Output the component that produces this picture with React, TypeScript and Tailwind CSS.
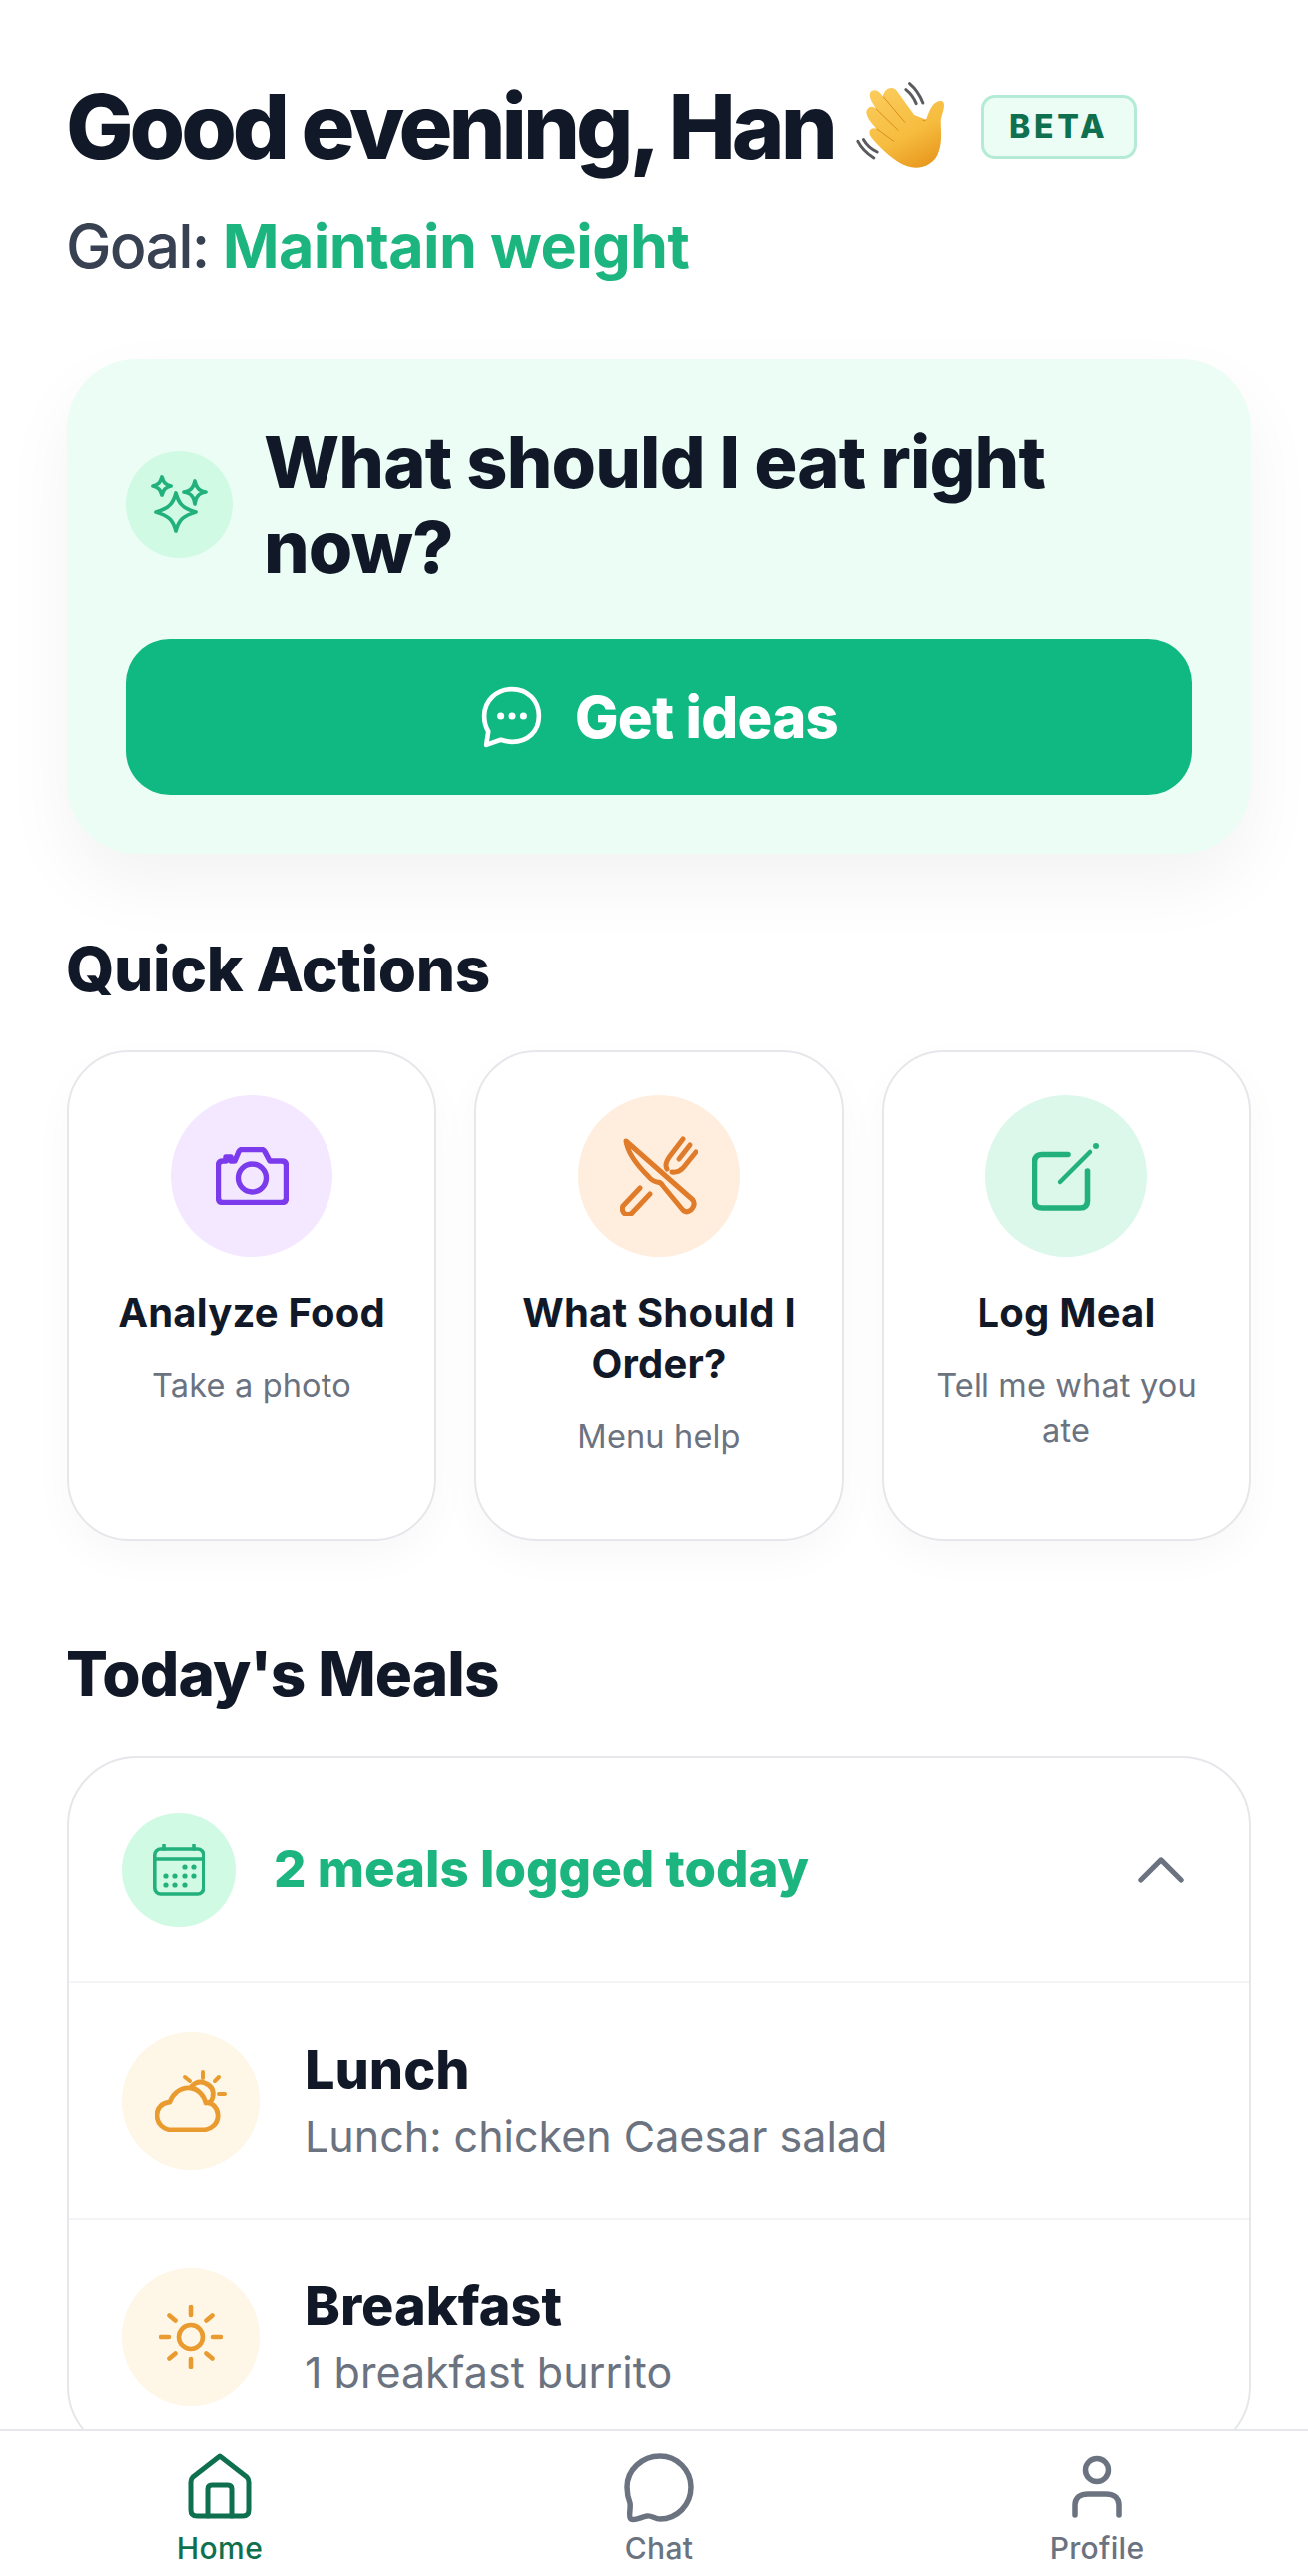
import React from "react";

function WaveHand() {
  return (
    <svg width="97" height="100" viewBox="40 50 290 300" fill="none" className="shrink-0">
      <defs>
        <linearGradient id="hand" x1="0.2" y1="0" x2="0.7" y2="1">
          <stop offset="0" stopColor="#FBCB5B" />
          <stop offset="0.6" stopColor="#F6BC3F" />
          <stop offset="1" stopColor="#E99A1F" />
        </linearGradient>
      </defs>
      <g stroke="#5B5B5F" strokeWidth="9" strokeLinecap="round">
        <path d="M212 70 Q238 92 252 128" />
        <path d="M201 88 Q222 105 232 130" />
        <path d="M57 243 Q72 272 105 293" />
        <path d="M74 238 Q88 262 115 275" />
      </g>
      <path
        d="M98 92 C112 84 124 96 132 108 C136 86 160 74 174 92 L226 164 L262 178 C270 150 285 118 308 122 C322 126 314 150 306 176 C304 200 312 240 300 272 C288 316 240 330 205 318 C170 305 130 270 98 232 C84 214 96 198 114 206 C98 190 74 160 86 146 C94 136 104 138 112 146 C100 126 84 104 98 92Z"
        fill="url(#hand)"
      />
      <g stroke="#D98E1E" strokeWidth="3" strokeLinecap="round">
        <path d="M134 110 L198 186" />
        <path d="M112 146 L178 210" />
        <path d="M114 206 L165 243" />
        <path d="M262 178 Q258 186 252 180" />
      </g>
    </svg>
  );
}

function Sparkles() {
  return (
    <svg width="58" height="58" viewBox="0 0 58 58" fill="none" stroke="#22B07D" strokeWidth="3.8" strokeLinejoin="round">
      <path d="M25 20 Q27 28 31 32 Q35 36 45 39 Q35 42 31 46 Q27 50 25 58 Q23 50 19 46 Q15 42 5 39 Q15 36 19 32 Q23 28 25 20Z" transform="translate(0 -2)" />
      <path d="M11 2 Q12 6 14 8 Q16 10 20 11 Q16 12 14 14 Q12 16 11 20 Q10 16 8 14 Q6 12 2 11 Q6 10 8 8 Q10 6 11 2Z" />
      <path d="M44 6 Q45 11 47 13 Q49 16 55 17 Q49 18 47 21 Q45 23 44 29 Q43 23 41 21 Q39 18 33 17 Q39 16 41 13 Q43 11 44 6Z" />
    </svg>
  );
}

function ChatDots() {
  return (
    <svg width="62" height="62" viewBox="0 0 60 60" fill="none" stroke="#fff" strokeWidth="4.5" strokeLinejoin="round">
      <path d="M31 3 C46 3 57 14 57 29 C57 44 46 54 31 54 C27 54 23 53 20 52 L6 57 L8 44 C5 39 4 34 4 29 C4 14 16 3 31 3Z" />
      <g fill="#fff" stroke="none">
        <circle cx="20" cy="29" r="3.4" />
        <circle cx="31" cy="29" r="3.4" />
        <circle cx="42" cy="29" r="3.4" />
      </g>
    </svg>
  );
}

function Camera() {
  return (
    <svg width="73" height="58" viewBox="0 0 73 58" fill="none" stroke="#7C3AED" strokeWidth="5.4" strokeLinejoin="round">
      <path d="M7 14 H10 V10 H15 V14 H19 L23 4.5 Q24 2.5 26 2.5 H46 Q48 2.5 49 4.5 L54 14 H66 Q70.5 14 70.5 18.5 V51 Q70.5 55.5 66 55.5 H7 Q2.5 55.5 2.5 51 V18.5 Q2.5 14 7 14Z" />
      <circle cx="36.5" cy="31" r="14" />
    </svg>
  );
}

function KnifeFork() {
  return (
    <svg width="78" height="80" viewBox="0 0 78 80" fill="none" stroke="#E07B2A" strokeWidth="5" strokeLinecap="round" strokeLinejoin="round">
      <path d="M6 5 L73 64 Q76 69 71 74 Q66 78 62 73 L43 50 Q41 46 37 46 Q32 45 28 40 Q8 20 6 5Z" />
      <path d="M20 52 L3 70 Q1 75 5 78 Q10 80 13 76 L30 58" />
      <path d="M63 3 L50 20 Q44 28 47 33" />
      <path d="M70 9 L59 23" />
      <path d="M76 16 L63 32 Q58 37 52 36" />
    </svg>
  );
}

function LogMeal() {
  return (
    <svg width="68" height="70" viewBox="0 0 68 70" fill="none" stroke="#22B07D" strokeWidth="5.6" strokeLinecap="round" strokeLinejoin="round">
      <path d="M36 13.5 H10 Q2.5 13.5 2.5 21 V60 Q2.5 67 10 67 H48 Q55.5 67 55.5 60 V30" />
      <path d="M28 41 L58 11" strokeWidth="4.5" />
      <circle cx="64" cy="5" r="3" fill="#22B07D" stroke="none" />
    </svg>
  );
}

function Calendar() {
  return (
    <svg width="52" height="52" viewBox="0 0 52 52" fill="none" stroke="#22B07D" strokeWidth="3.6" strokeLinecap="round" strokeLinejoin="round">
      <rect x="1.8" y="5" width="49" height="45" rx="6" />
      <path d="M1.8 15 H50.8" />
      <path d="M11 1 V5 M41 1 V5" />
      <g fill="#22B07D" stroke="none">
        <circle cx="32" cy="23" r="2.6" />
        <circle cx="41" cy="23" r="2.6" />
        <circle cx="13" cy="32" r="2.6" />
        <circle cx="22" cy="32" r="2.6" />
        <circle cx="32" cy="32" r="2.6" />
        <circle cx="41" cy="32" r="2.6" />
        <circle cx="13" cy="41" r="2.6" />
        <circle cx="22" cy="41" r="2.6" />
        <circle cx="32" cy="41" r="2.6" />
      </g>
    </svg>
  );
}

function CloudSun() {
  return (
    <svg width="72" height="62" viewBox="0 0 72 62" fill="none" stroke="#E99B2F" strokeWidth="4.8" strokeLinecap="round" strokeLinejoin="round">
      <path d="M48 2 V8 M30 7 L35 11 M64 7 L60 11 M64 24 H70" strokeWidth="4" />
      <path d="M37 16 Q43 10 50 13 Q60 17 58 27 Q57 31 55 32" />
      <path d="M36 18 Q28 17 22 22 Q17 26 15 32 C6 33 2 39 2 45 C2 54 9 60 17 60 H47 C57 60 64 53 63 44 C62 36 56 32 51 33 C49 25 43 19 36 18Z" />
    </svg>
  );
}

function Sun() {
  return (
    <svg width="64" height="64" viewBox="0 0 64 64" fill="none" stroke="#E99B2F" strokeWidth="4.6" strokeLinecap="round">
      <circle cx="32" cy="32" r="12" />
      <path d="M32 2 V10 M32 54 V62 M2 32 H10 M54 32 H62 M10.5 10.5 L16.5 15.5 M53.5 10.5 L47.5 15.5 M10.5 53.5 L16.5 48.5 M53.5 53.5 L47.5 48.5" />
    </svg>
  );
}

function HomeIcon() {
  return (
    <svg width="64" height="66" viewBox="0 0 64 66" fill="none" stroke="#0F7050" strokeWidth="5" strokeLinejoin="round" strokeLinecap="round">
      <path d="M32 3 L59 24 Q61 26 61 29 V57 Q61 63 55 63 H9 Q3 63 3 57 V29 Q3 26 5 24 Z" />
      <path d="M20 63 V36 Q20 32 24 32 H40 Q44 32 44 36 V63" />
    </svg>
  );
}

function ChatIcon() {
  return (
    <svg width="70" height="70" viewBox="0 0 70 70" fill="none" stroke="#6B7280" strokeWidth="5.5" strokeLinejoin="round">
      <path d="M36 3 C53 3 67 17 67 34 C67 52 53 66 36 66 C31 66 27 62 23 63 C17 64 11 68 7 66 C4 64 7 56 6 50 C4 45 3 40 3 34 C3 17 18 3 36 3Z" />
    </svg>
  );
}

function PersonIcon() {
  return (
    <svg width="52" height="66" viewBox="0 0 52 66" fill="none" stroke="#6B7280" strokeWidth="5.5" strokeLinecap="round">
      <circle cx="26" cy="17" r="11.5" />
      <path d="M4 62 V52 C4 44 10 41 17 41 H35 C42 41 48 44 48 52 V62" />
    </svg>
  );
}

function ActionCard({
  circle,
  icon,
  title,
  desc,
}: {
  circle: string;
  icon: React.ReactNode;
  title: string;
  desc: string;
}) {
  return (
    <div className="flex h-[491px] flex-col items-center rounded-[62px] border-[2.5px] border-[#E5E7EB] bg-white px-[30px] pt-[43px] text-center shadow-[0_16px_40px_rgba(17,24,39,0.03)]">
      <div className={`flex h-[162px] w-[162px] items-center justify-center rounded-full ${circle}`}>{icon}</div>
      <div className="mt-[30px] text-[40px] leading-[51px] font-bold tracking-[0.005em] whitespace-pre-line text-[#111827]">{title}</div>
      <div className="mt-[25px] text-[32.5px] leading-[45px] tracking-[0.005em] text-[#6B7280]">{desc}</div>
    </div>
  );
}

function MealRow({ icon, title, desc, border }: { icon: React.ReactNode; title: string; desc: string; border?: boolean }) {
  return (
    <div className={`flex h-[237px] items-center gap-[45px] px-[53px] ${border ? "border-t-[2px] border-[#F3F4F6]" : ""}`}>
      <div className="flex h-[138px] w-[138px] shrink-0 items-center justify-center rounded-full bg-[#FEF6E6]">{icon}</div>
      <div>
        <div className="text-[54px] leading-[66px] font-extrabold text-[#111827]">{title}</div>
        <div className="mt-[4px] text-[43px] leading-[58px] text-[#6B7280]">{desc}</div>
      </div>
    </div>
  );
}

export default function App() {
  return (
    <div className="flex h-[2580px] w-[1310px] flex-col overflow-hidden bg-white font-['Inter',sans-serif]">
      <main className="min-h-0 flex-1 overflow-hidden pt-[77px] pr-[57px] pl-[66px]">
        <div className="flex items-center">
          <h1 className="text-[90px] leading-[100px] font-extrabold tracking-[-0.046em] whitespace-nowrap text-[#111827]">
            Good evening, Han
          </h1>
          <div className="ml-[18px]">
            <WaveHand />
          </div>
          <div className="ml-[33px] flex h-[64px] w-[156px] items-center justify-center rounded-[14px] border-[3px] border-[#B4EBD5] bg-[#ECFDF5] text-[32px] font-extrabold tracking-[0.12em] text-[#0F7050]">
            BETA
          </div>
        </div>
        <div className="mt-[34px] text-[61px] leading-[70px] font-bold text-[#374151]">
          <span className="font-medium tracking-[-0.03em]">Goal: </span>
          <span className="tracking-[-0.01em] text-[#1DB57F]">Maintain weight</span>
        </div>

        <section className="mt-[79px] ml-[1px] rounded-[70px] bg-[#ECFDF5] px-[59px] pt-[60px] pb-[59px] shadow-[0_30px_70px_rgba(17,24,39,0.05)]">
          <div className="flex items-center gap-[31px]">
            <div className="flex h-[107px] w-[107px] shrink-0 items-center justify-center rounded-full bg-[#D1FAE5]">
              <Sparkles />
            </div>
            <h2 className="text-[72px] leading-[85px] font-extrabold tracking-[-0.012em] text-[#111827]">What should I eat right now?</h2>
          </div>
          <button className="mt-[50px] flex h-[156px] w-full items-center justify-center gap-[33px] rounded-[44px] bg-[#10B981] text-[58px] font-extrabold tracking-[-0.012em] text-white">
            <ChatDots />
            Get ideas
          </button>
        </section>

        <h2 className="mt-[80px] text-[62px] leading-[72px] font-extrabold tracking-[-0.006em] text-[#111827]">Quick Actions</h2>
        <div className="mt-[45px] ml-[1px] grid grid-cols-3 gap-[38px]">
          <ActionCard circle="bg-[#F3E8FF]" icon={<Camera />} title="Analyze Food" desc="Take a photo" />
          <ActionCard circle="bg-[#FFEDDD]" icon={<KnifeFork />} title="What Should I Order?" desc="Menu help" />
          <ActionCard circle="bg-[#DCF8EB]" icon={<LogMeal />} title="Log Meal" desc="Tell me what you ate" />
        </div>

        <h2 className="mt-[98px] text-[62px] leading-[72px] font-extrabold tracking-[-0.014em] text-[#111827]">Today's Meals</h2>
        <section className="mt-[46px] ml-[1px] rounded-[70px] border-[2.5px] border-[#E5E7EB] bg-white">
          <div className="flex h-[223px] items-center px-[53px]">
            <div className="flex h-[114px] w-[114px] shrink-0 items-center justify-center rounded-full bg-[#D1FAE5]">
              <Calendar />
            </div>
            <div className="ml-[38px] flex-1 text-[51px] font-extrabold text-[#1DB57F]">2 meals logged today</div>
            <svg width="46" height="27" viewBox="0 0 48 28" fill="none" stroke="#6B7280" strokeWidth="5.4" strokeLinecap="round" strokeLinejoin="round" className="mr-[12px]">
              <path d="M3 25 L24 4 L45 25" />
            </svg>
          </div>
          <MealRow border icon={<CloudSun />} title="Lunch" desc="Lunch: chicken Caesar salad" />
          <MealRow border icon={<Sun />} title="Breakfast" desc="1 breakfast burrito" />
        </section>
      </main>
      <nav className="grid h-[147px] shrink-0 grid-cols-[440px_440px_1fr] border-t-[2px] border-[#E5E7EB] bg-white pt-[22px]">
        <div className="flex flex-col items-center">
          <HomeIcon />
          <span className="mt-[10px] text-[30px] leading-[38px] font-medium tracking-[0.015em] text-[#0F7050]">Home</span>
        </div>
        <div className="flex flex-col items-center">
          <ChatIcon />
          <span className="mt-[6px] text-[30px] leading-[38px] font-medium tracking-[0.01em] text-[#6B7280]">Chat</span>
        </div>
        <div className="flex flex-col items-center pl-[8px]">
          <PersonIcon />
          <span className="mt-[10px] text-[30px] leading-[38px] font-medium tracking-[0.01em] text-[#6B7280]">Profile</span>
        </div>
      </nav>
    </div>
  );
}
